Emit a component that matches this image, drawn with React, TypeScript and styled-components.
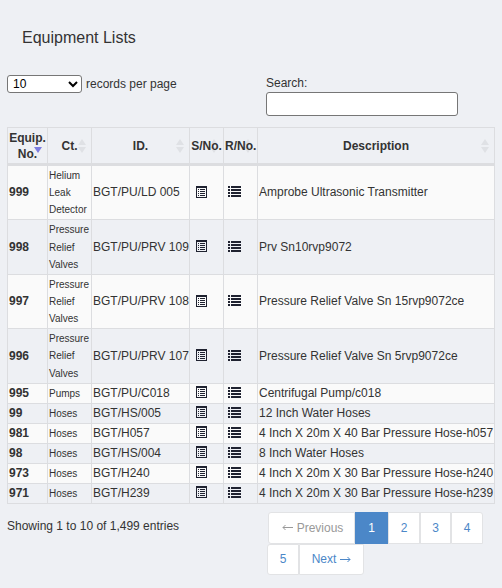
import React from "react";
import styled, { createGlobalStyle } from "styled-components";

const Global = createGlobalStyle`
  html, body { margin: 0; padding: 0; background: #eef0f4; }
  body { font-family: "Liberation Sans", Arial, sans-serif; font-size: 12px; color: #333; width: 502px; height: 588px; overflow: hidden; }
`;

const Page = styled.div`
  padding: 0 7px;
  width: 502px;
  height: 588px;
  box-sizing: border-box;
`;
const Title = styled.h1`
  margin: 0;
  padding: 28px 0 0 15px;
  font-size: 16px;
  font-weight: 400;
  line-height: 19px;
  color: #333;
`;
const Controls = styled.div`
  display: flex;
  justify-content: space-between;
  margin-top: 28px;
  height: 52px;
`;
const Length = styled.label`
  display: flex;
  align-items: center;
  gap: 4px;
  height: 18px;
`;
const PageSize = styled.select`
  width: 75px;
  height: 18px;
  padding: 0 0 0 1px;
  font: 12px "Liberation Sans", Arial, sans-serif;
  color: #000;
  background: #fff;
  border: 1px solid #767676;
  border-radius: 3px;
  box-sizing: border-box;
`;
const SearchBox = styled.label`
  display: flex;
  flex-direction: column;
  width: 229px;
  line-height: 14px;
  margin-top: 1px;
`;
const SearchInput = styled.input`
  width: 192px;
  height: 24px;
  margin-top: 2px;
  padding: 0;
  background: #fff;
  border: 1px solid #767676;
  border-radius: 3px;
  box-sizing: border-box;
`;
const Table = styled.table`
  width: 488px;
  table-layout: fixed;
  border-collapse: collapse;
  border: 1px solid #dcdde0;
`;
const Head = styled.th`
  position: relative;
  height: 35px;
  padding: 0 1px;
  border: 1px solid #dcdde0;
  border-bottom: 3px solid #dcdde0;
  font-size: 12px;
  font-weight: 700;
  line-height: 16px;
  text-align: center;
  color: #333;
`;
const HeadLabel = styled.span`
  position: relative;
  z-index: 1;
`;
const Sort = styled.span<{ $active?: boolean }>`
  position: absolute;
  right: 9px;
  top: 50%;
  width: 0;
  height: 0;
  margin-top: -7px;
  &::before, &::after {
    content: "";
    position: absolute;
    left: -4px;
    border-left: 4px solid transparent;
    border-right: 4px solid transparent;
  }
  &::before {
    top: 0;
    border-bottom: 6px solid #dfe1e5;
    display: ${(p) => (p.$active ? "none" : "block")};
  }
  &::after {
    top: 8px;
    border-top: 6px solid ${(p) => (p.$active ? "#7d7de0" : "#dfe1e5")};
  }
`;
const Row = styled.tr<{ $odd: boolean }>`
  background: ${(p) => (p.$odd ? "#fafafa" : "#eef0f4")};
`;
const Cell = styled.td`
  padding: 0 1px;
  height: 19px;
  border: 1px solid #dcdde0;
  font-size: 12px;
  line-height: 17px;
  white-space: nowrap;
`;
const NoCell = styled(Cell)`
  font-weight: 700;
`;
const CatCell = styled(Cell)`
  height: 0;
  font-size: 10px;
  white-space: normal;
  padding: 0.85px 0 0.85px 1px;
  line-height: 17.25px;
`;
const IconCell = styled(Cell)`
  padding-left: 6px;
  line-height: 0;
  svg { display: block; margin-top: -2px; }
`;
const ListIconCell = styled(IconCell)`
  padding-left: 4px;
`;
const Footer = styled.div`
  display: flex;
  justify-content: space-between;
  margin-top: 8px;
`;
const Info = styled.div`
  padding-top: 7px;
  line-height: 14px;
`;
const Pager = styled.div`
  display: flex;
  flex-wrap: wrap;
  width: 228px;
`;
const PageLink = styled.a<{ $w: number; $active?: boolean; $disabled?: boolean; $radius?: string }>`
  display: flex;
  align-items: center;
  justify-content: center;
  gap: 4px;
  box-sizing: border-box;
  width: ${(p) => p.$w}px;
  height: 32px;
  background: ${(p) => (p.$active ? "#4b87c8" : "#fff")};
  color: ${(p) => (p.$active ? "#fff" : p.$disabled ? "#999" : "#4b87c8")};
  border: 1px solid ${(p) => (p.$active ? "#4b87c8" : "#e2e3e5")};
  border-radius: ${(p) => p.$radius ?? "0"};
  font-size: 12px;
`;
const PrevLink = styled(PageLink)`
  margin-left: 1px;
  padding-left: 2px;
`;
const LastLink = styled(PageLink)`
  height: 31px;
`;
const Glyph = styled.svg`
  display: block;
  flex: none;
  color: #1f2230;
`;
const Arrow = styled.svg`
  display: block;
  flex: none;
`;

const ListAltIcon = () => (
  <Glyph width="11" height="12" viewBox="0 0 11 12">
    <rect x="0.5" y="0.5" width="10" height="11" fill="none" stroke="currentColor" />
    <rect x="0" y="0" width="11" height="2" fill="currentColor" />
    {[3, 5, 7, 9].map((y) => (
      <g key={y} fill="currentColor">
        <rect x="2" y={y} width="1" height="1" />
        <rect x="4" y={y} width="5" height="1" />
      </g>
    ))}
  </Glyph>
);
const ListIcon = () => (
  <Glyph width="13" height="11" viewBox="0 0 13 11">
    {[0, 3, 6, 9].map((y) => (
      <g key={y} fill="currentColor">
        <rect x="0" y={y} width="2" height="2" />
        <rect x="3" y={y} width="10" height="2" />
      </g>
    ))}
  </Glyph>
);
const LeftArrow = () => (
  <Arrow width="11" height="7" viewBox="0 0 11 7" fill="none" stroke="currentColor">
    <path d="M11 3.5H1M3.5 1L1 3.5L3.5 6" />
  </Arrow>
);
const RightArrow = () => (
  <Arrow width="11" height="7" viewBox="0 0 11 7" fill="none" stroke="currentColor">
    <path d="M0 3.5H10M7.5 1L10 3.5L7.5 6" />
  </Arrow>
);

type Item = { no: string; cat: string; id: string; desc: string };
const items: Item[] = [
  { no: "999", cat: "Helium Leak Detector", id: "BGT/PU/LD 005", desc: "Amprobe Ultrasonic Transmitter" },
  { no: "998", cat: "Pressure Relief Valves", id: "BGT/PU/PRV 109", desc: "Prv Sn10rvp9072" },
  { no: "997", cat: "Pressure Relief Valves", id: "BGT/PU/PRV 108", desc: "Pressure Relief Valve Sn 15rvp9072ce" },
  { no: "996", cat: "Pressure Relief Valves", id: "BGT/PU/PRV 107", desc: "Pressure Relief Valve Sn 5rvp9072ce" },
  { no: "995", cat: "Pumps", id: "BGT/PU/C018", desc: "Centrifugal Pump/c018" },
  { no: "99", cat: "Hoses", id: "BGT/HS/005", desc: "12 Inch Water Hoses" },
  { no: "981", cat: "Hoses", id: "BGT/H057", desc: "4 Inch X 20m X 40 Bar Pressure Hose-h057" },
  { no: "98", cat: "Hoses", id: "BGT/HS/004", desc: "8 Inch Water Hoses" },
  { no: "973", cat: "Hoses", id: "BGT/H240", desc: "4 Inch X 20m X 30 Bar Pressure Hose-h240" },
  { no: "971", cat: "Hoses", id: "BGT/H239", desc: "4 Inch X 20m X 30 Bar Pressure Hose-h239" },
];

export default function App() {
  return (
    <Page>
      <Global />
      <Title>Equipment Lists</Title>
      <Controls>
        <Length>
          <PageSize defaultValue="10">
            <option value="10">10</option>
            <option value="25">25</option>
            <option value="50">50</option>
          </PageSize>
          records per page
        </Length>
        <SearchBox>
          Search:
          <SearchInput type="text" />
        </SearchBox>
      </Controls>
      <Table>
        <colgroup>
          <col style={{ width: 40 }} />
          <col style={{ width: 44 }} />
          <col style={{ width: 98 }} />
          <col style={{ width: 34 }} />
          <col style={{ width: 34 }} />
          <col />
        </colgroup>
        <thead>
          <tr>
            <Head><Sort $active /><HeadLabel>Equip. No.</HeadLabel></Head>
            <Head><Sort /><HeadLabel>Ct.</HeadLabel></Head>
            <Head><Sort /><HeadLabel>ID.</HeadLabel></Head>
            <Head><Sort /><HeadLabel>S/No.</HeadLabel></Head>
            <Head><Sort /><HeadLabel>R/No.</HeadLabel></Head>
            <Head><Sort /><HeadLabel>Description</HeadLabel></Head>
          </tr>
        </thead>
        <tbody>
          {items.map((it, i) => (
            <Row key={it.no} $odd={i % 2 === 0}>
              <NoCell>{it.no}</NoCell>
              <CatCell>{it.cat}</CatCell>
              <Cell>{it.id}</Cell>
              <IconCell><ListAltIcon /></IconCell>
              <ListIconCell><ListIcon /></ListIconCell>
              <Cell>{it.desc}</Cell>
            </Row>
          ))}
        </tbody>
      </Table>
      <Footer>
        <Info>Showing 1 to 10 of 1,499 entries</Info>
        <Pager>
          <PrevLink $w={87} $disabled $radius="3px 0 0 3px"><LeftArrow />Previous</PrevLink>
          <PageLink $w={33} $active>1</PageLink>
          <PageLink $w={32}>2</PageLink>
          <PageLink $w={31}>3</PageLink>
          <PageLink $w={32} $radius="0 3px 0 0">4</PageLink>
          <LastLink $w={32} $radius="3px 0 0 3px">5</LastLink>
          <LastLink $w={65} $radius="0 0 3px 0">Next<RightArrow /></LastLink>
        </Pager>
      </Footer>
    </Page>
  );
}
